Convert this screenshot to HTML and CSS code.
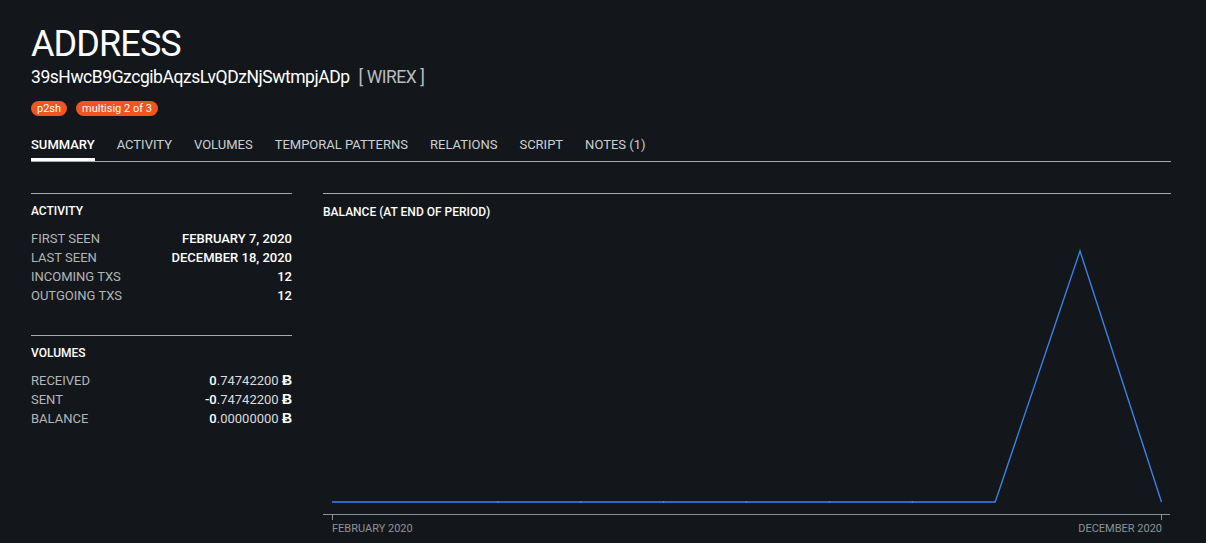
FILE: index.html
```html
<!DOCTYPE html>
<html>
<head>
<meta charset="utf-8">
<link rel="stylesheet" href="styles.css">
</head>
<body>
<div class="page">
  <h1 class="title">ADDRESS</h1>
  <div class="address">39sHwcB9GzcgibAqzsLvQDzNjSwtmpjADp<span class="tag">[ WIREX ]</span></div>
  <div class="badges">
    <span class="badge">p2sh</span>
    <span class="badge">multisig 2 of 3</span>
  </div>
  <nav class="tabs">
    <span class="tab active">SUMMARY</span>
    <span class="tab">ACTIVITY</span>
    <span class="tab">VOLUMES</span>
    <span class="tab">TEMPORAL PATTERNS</span>
    <span class="tab">RELATIONS</span>
    <span class="tab">SCRIPT</span>
    <span class="tab">NOTES (1)</span>
  </nav>
  <div class="content">
    <div class="left">
      <section class="panel">
        <h2 class="panel-title">ACTIVITY</h2>
        <div class="row"><span class="label">FIRST SEEN</span><span class="value">FEBRUARY 7, 2020</span></div>
        <div class="row"><span class="label">LAST SEEN</span><span class="value">DECEMBER 18, 2020</span></div>
        <div class="row"><span class="label">INCOMING TXS</span><span class="value">12</span></div>
        <div class="row"><span class="label">OUTGOING TXS</span><span class="value">12</span></div>
      </section>
      <section class="panel">
        <h2 class="panel-title">VOLUMES</h2>
        <div class="row"><span class="label">RECEIVED</span><span class="value">0<span class="dec">.74742200</span> <span class="btc">Ƀ</span></span></div>
        <div class="row"><span class="label">SENT</span><span class="value">-0<span class="dec">.74742200</span> <span class="btc">Ƀ</span></span></div>
        <div class="row"><span class="label">BALANCE</span><span class="value">0<span class="dec">.00000000</span> <span class="btc">Ƀ</span></span></div>
      </section>
    </div>
    <section class="panel chart">
      <h2 class="panel-title">BALANCE (AT END OF PERIOD)</h2>
      <svg class="chart-svg" width="848" height="323" viewBox="0 0 848 323">
        <line x1="1" y1="294.5" x2="848" y2="294.5" stroke="#8a9297" stroke-width="1"/>
        <line x1="10.5" y1="294" x2="10.5" y2="300" stroke="#8a9297" stroke-width="1"/>
        <line x1="839.5" y1="294" x2="839.5" y2="300" stroke="#8a9297" stroke-width="1"/>
        <line x1="10" y1="282" x2="673.5" y2="282" stroke="#2f68c4" stroke-width="2"/>
        <polyline fill="none" stroke="#3c80e4" stroke-width="1.4"
          points="673.2,282 758,31 839.5,282"/>
        <g fill="#5a8fe0">
          <circle cx="175.8" cy="282" r="0.8"/>
          <circle cx="258.7" cy="282" r="0.8"/>
          <circle cx="341.6" cy="282" r="0.8"/>
          <circle cx="424.5" cy="282" r="0.8"/>
          <circle cx="507.4" cy="282" r="0.8"/>
          <circle cx="590.3" cy="282" r="0.8"/>
        </g>
        <text x="10" y="312" class="axis-label">FEBRUARY 2020</text>
        <text x="840" y="312" class="axis-label" text-anchor="end">DECEMBER 2020</text>
      </svg>
    </section>
  </div>
</div>
</body>
</html>
```

FILE: styles.css
```css
html, body {
  margin: 0;
  padding: 0;
  background: #13171b;
  height: 100%;
  overflow: hidden;
}
body {
  font-family: Roboto, "Liberation Sans", sans-serif;
  color: #f2f3f4;
}
.page {
  padding: 26px 35px 0 31px;
}
.title {
  margin: 0;
  font-size: 36px;
  font-weight: 400;
  line-height: 36px;
  letter-spacing: -0.9px;
  color: #ffffff;
}
.address {
  margin-top: 4px;
  font-size: 17.5px;
  line-height: 22px;
  letter-spacing: -0.45px;
  color: #ffffff;
}
.tag {
  margin-left: 9px;
  color: #b9bdc0;
}
.badges {
  display: flex;
  gap: 9px;
  margin-top: 13px;
}
.badge {
  background: #f0541f;
  color: #ffffff;
  font-size: 11px;
  line-height: 15px;
  padding: 0 6px;
  border-radius: 8px;
}
.tabs {
  display: flex;
  gap: 22px;
  margin-top: 21px;
  border-bottom: 1px solid #a5abaf;
}
.tab {
  font-size: 13px;
  line-height: 16px;
  padding-bottom: 5px;
  border-bottom: 3px solid transparent;
  color: #cdd0d3;
}
.tab.active {
  color: #ffffff;
  font-weight: 500;
  border-bottom-color: #ffffff;
}
.content {
  display: flex;
  gap: 31px;
  margin-top: 31px;
}
.left {
  width: 261px;
  display: flex;
  flex-direction: column;
  gap: 30px;
}
.panel {
  border-top: 1px solid #a5abaf;
  padding-top: 9px;
}
.chart {
  flex: 1;
  padding-top: 10px;
}
.panel-title {
  margin: 0 0 10px 0;
  font-size: 12px;
  line-height: 16px;
  font-weight: 500;
  color: #ffffff;
}
.chart .panel-title {
  margin-bottom: 0;
}
.row {
  display: flex;
  justify-content: space-between;
  font-size: 13px;
  line-height: 19px;
}
.label {
  color: #b2b6b9;
}
.value {
  font-weight: 500;
  color: #ffffff;
}
.dec {
  font-weight: 400;
  color: #d9dcde;
}
.btc {
  font-weight: 700;
  font-size: 14px;
}
.chart-svg {
  display: block;
  margin-left: -1px;
}
.axis-label {
  font-family: Roboto, "Liberation Sans", sans-serif;
  font-size: 11px;
  fill: #8c9398;
}
```
